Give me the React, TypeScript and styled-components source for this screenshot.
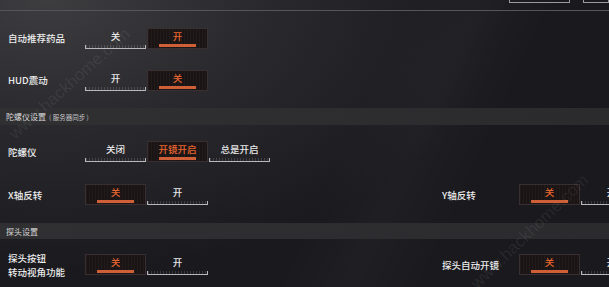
import styled, { createGlobalStyle, css } from 'styled-components';

const GlobalStyle = createGlobalStyle`
  html, body {
    margin: 0;
    padding: 0;
    background: #19191d;
  }
  body {
    font-family: "Noto Sans CJK SC", "Noto Sans", sans-serif;
  }
`;

type Option = { text: string; active?: boolean };
type Setting = { label: string[]; options: Option[] };

const off: Option[] = [{ text: '关' }, { text: '开', active: true }];
const onOff: Option[] = [{ text: '开' }, { text: '关', active: true }];
const flipped: Option[] = [{ text: '关', active: true }, { text: '开' }];

const SettingItem = ({ setting }: { setting: Setting }) => (
  <Cell>
    <Label>
      {setting.label.map((line) => (
        <span key={line}>{line}</span>
      ))}
    </Label>
    <SegGroup>
      {setting.options.map((o) => (
        <Seg key={o.text} $active={o.active}>
          {o.text}
        </Seg>
      ))}
    </SegGroup>
  </Cell>
);

const App = () => {
  return (
    <>
      <GlobalStyle />
      <Screen>
        <TopStrip>
          <TopTail $width={61} />
          <TopTail $width={26} />
        </TopStrip>

        <Group $top={6}>
          <Row>
            <SettingItem setting={{ label: ['自动推荐药品'], options: off }} />
          </Row>
          <Row>
            <SettingItem setting={{ label: ['HUD震动'], options: onOff }} />
          </Row>
        </Group>

        <Band $top={7} $height={17}>
          陀螺仪设置<small>( 服务器同步 )</small>
        </Band>

        <Group $top={5}>
          <Row $height={43}>
            <SettingItem
              setting={{
                label: ['陀螺仪'],
                options: [{ text: '关闭' }, { text: '开镜开启', active: true }, { text: '总是开启' }],
              }}
            />
          </Row>
          <Row $height={43}>
            <SettingItem setting={{ label: ['X轴反转'], options: flipped }} />
            <SettingItem setting={{ label: ['Y轴反转'], options: flipped }} />
          </Row>
        </Group>

        <Band $top={7} $height={16}>探头设置</Band>

        <Group $top={4}>
          <Row $height={43}>
            <SettingItem setting={{ label: ['探头按钮', '转动视角功能'], options: flipped }} />
            <SettingItem setting={{ label: ['探头自动开镜'], options: flipped }} />
          </Row>
        </Group>

        <Watermark $x={-8} $y={74} $rot={-42}>www.hackhome.com</Watermark>
        <Watermark $x={452} $y={222} $rot={-44}>www.hackhome.com</Watermark>
      </Screen>
    </>
  );
};

export default App;

const Screen = styled.div`
  position: relative;
  width: 609px;
  height: 287px;
  overflow: hidden;
  background:
    linear-gradient(115deg, transparent 55%, rgba(255, 255, 255, 0.025) 65%, transparent 75%),
    radial-gradient(ellipse 75% 95% at 8% 0%, #3d3d40 0%, #2a2a2e 45%, #1a1a1e 100%);
  color: #e6e6e6;
  display: flex;
  flex-direction: column;
`;

const TopStrip = styled.div`
  height: 10px;
  border-bottom: 1px solid #55555b;
  display: flex;
  justify-content: flex-end;
  align-items: flex-start;
  gap: 13px;
  overflow: hidden;
`;

const TopTail = styled.div<{ $width: number }>`
  width: ${(p) => p.$width}px;
  height: 3px;
  box-sizing: border-box;
  border: 1px solid #9a9aa0;
  border-top: none;
  flex-shrink: 0;
`;

const Group = styled.div<{ $top: number }>`
  padding-top: ${(p) => p.$top}px;
  display: flex;
  flex-direction: column;
`;

const Row = styled.div<{ $height?: number }>`
  height: ${(p) => p.$height ?? 42}px;
  padding-left: 8px;
  display: grid;
  grid-template-columns: 434px 1fr;
  align-items: center;
`;

const Cell = styled.div`
  display: flex;
  align-items: center;
`;

const Label = styled.div`
  width: 77px;
  flex-shrink: 0;
  display: flex;
  flex-direction: column;
  font-size: 9.5px;
  font-weight: 500;
  line-height: 14px;
  color: #ececec;
  white-space: nowrap;
`;

const SegGroup = styled.div`
  display: flex;
  gap: 1px;
`;

const Seg = styled.div<{ $active?: boolean }>`
  position: relative;
  width: 61px;
  height: 21px;
  box-sizing: border-box;
  flex-shrink: 0;
  padding-bottom: 3px;
  display: flex;
  align-items: center;
  justify-content: center;
  font-size: 9.5px;
  font-weight: 500;
  line-height: 1;
  color: ${(p) => (p.$active ? '#e8652e' : '#e8e8e8')};

  ${(p) =>
    p.$active
      ? css`
          background:
            repeating-linear-gradient(90deg, rgba(255, 255, 255, 0.03) 0 1px, transparent 1px 3px),
            #1a1415;
          border: 1px solid #3a2f30;
          &::after {
            content: '';
            position: absolute;
            left: 18%;
            right: 18%;
            bottom: 1px;
            height: 3px;
            background: #cf5f37;
          }
        `
      : css`
          &::after {
            content: '';
            position: absolute;
            left: 0;
            right: 0;
            bottom: 0;
            height: 4px;
            box-sizing: border-box;
            border: 1px solid #b8b8bc;
            border-top: none;
            background: repeating-linear-gradient(
              90deg,
              rgba(255, 255, 255, 0.14) 0 1px,
              transparent 1px 3px
            );
          }
        `}
`;

const Band = styled.div<{ $top: number; $height: number }>`
  margin-top: ${(p) => p.$top}px;
  height: ${(p) => p.$height}px;
  padding-left: 6px;
  display: flex;
  align-items: center;
  gap: 3px;
  background: linear-gradient(90deg, #303033 0%, #2b2b2e 100%);
  font-size: 8px;
  color: #d8d8d8;

  small {
    font-size: 6.5px;
    color: #c4c4c4;
  }
`;

const Watermark = styled.div<{ $x: number; $y: number; $rot: number }>`
  position: absolute;
  left: ${(p) => p.$x}px;
  top: ${(p) => p.$y}px;
  transform: rotate(${(p) => p.$rot}deg);
  font-family: "Liberation Sans", Arial, sans-serif;
  font-size: 17px;
  color: rgba(255, 255, 255, 0.07);
  white-space: nowrap;
  pointer-events: none;
`;
